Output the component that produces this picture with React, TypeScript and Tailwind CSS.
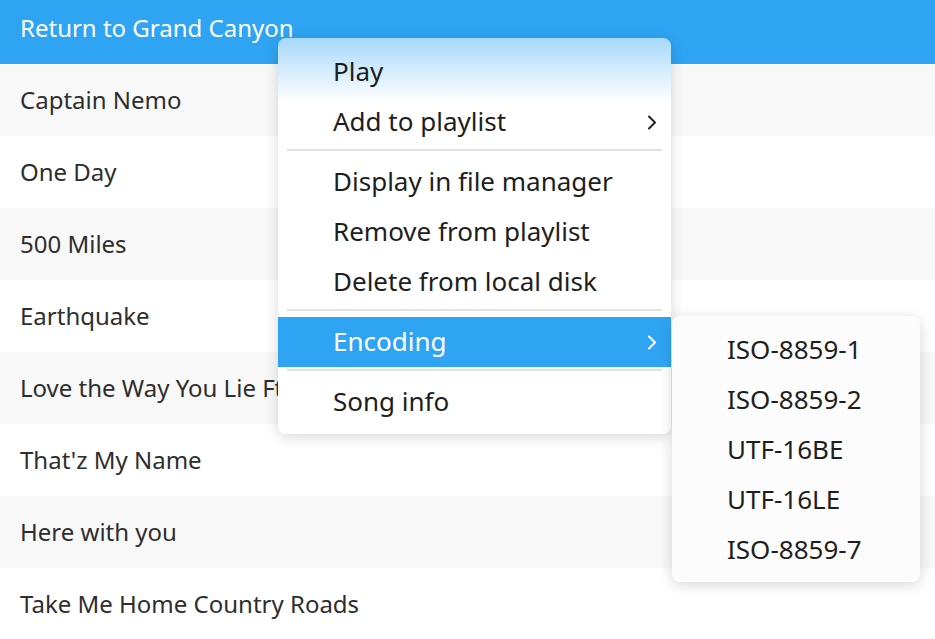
import { Fragment } from 'react';

const songs = [
  'Return to Grand Canyon',
  'Captain Nemo',
  'One Day',
  '500 Miles',
  'Earthquake',
  'Love the Way You Lie Ft. Rihanna',
  "That'z My Name",
  'Here with you',
  'Take Me Home Country Roads',
];

type MenuItem = { label: string; sub?: boolean; active?: boolean } | 'sep';

const menu: MenuItem[] = [
  { label: 'Play' },
  { label: 'Add to playlist', sub: true },
  'sep',
  { label: 'Display in file manager' },
  { label: 'Remove from playlist' },
  { label: 'Delete from local disk' },
  'sep',
  { label: 'Encoding', sub: true, active: true },
  'sep',
  { label: 'Song info' },
];

const encodings = ['ISO-8859-1', 'ISO-8859-2', 'UTF-16BE', 'UTF-16LE', 'ISO-8859-7'];

function Chevron({ color }: { color: string }) {
  return (
    <svg width="10" height="15" viewBox="0 0 10 15" fill="none">
      <polyline points="2,1.5 8,7.5 2,13.5" stroke={color} strokeWidth="2" strokeLinecap="round" strokeLinejoin="round" />
    </svg>
  );
}

export default function App() {
  return (
    <div className="relative w-[935px] h-[639px] overflow-hidden bg-white font-['Noto_Sans',sans-serif]">
      {/* song list */}
      <div className="-mt-2 flex flex-col">
        {songs.map((s, i) => (
          <div
            key={s}
            className={
              'h-[72px] shrink-0 flex items-center pl-5 text-[24px] whitespace-nowrap ' +
              (i === 0 ? 'bg-[#2fa4f3] text-white' : i % 2 === 1 ? 'bg-[#f8f8f8] text-[#2e2e2e]' : 'bg-white text-[#2e2e2e]')
            }
          >
            {s}
          </div>
        ))}
      </div>

      {/* context menu */}
      <div className="absolute left-[278px] top-[38px] w-[393px] rounded-lg pt-[9px] pb-[7px] bg-[linear-gradient(180deg,#a6d8fb_0px,#ffffff_64px)] shadow-[0_3px_14px_rgba(0,0,0,0.16)]">
        {menu.map((m, i) =>
          m === 'sep' ? (
            <div key={i} className="h-[10px] pt-[2px] px-[9px]">
              <div className="h-[2px] bg-[#e2e2e2]" />
            </div>
          ) : (
            <Fragment key={i}>
              <div
                className={
                  'h-[50px] flex items-center justify-between pl-[55px] pr-[14px] text-[26px] ' +
                  (m.active ? 'bg-[#2fa4f3] text-white' : 'text-[#1e1e1e]')
                }
              >
                <span className="-mt-[2px]">{m.label}</span>
                {m.sub && <Chevron color={m.active ? '#ffffff' : '#222222'} />}
              </div>
            </Fragment>
          )
        )}
      </div>

      {/* encoding submenu */}
      <div className="absolute left-[672px] top-[316px] w-[248px] rounded-lg pt-[9px] pb-[7px] bg-[#fcfcfc] shadow-[0_3px_14px_rgba(0,0,0,0.16)]">
        {encodings.map((e) => (
          <div key={e} className="h-[50px] flex items-center pl-[55px] text-[26px] text-[#1e1e1e]">
            <span className="-mt-[2px]">{e}</span>
          </div>
        ))}
      </div>
    </div>
  );
}
